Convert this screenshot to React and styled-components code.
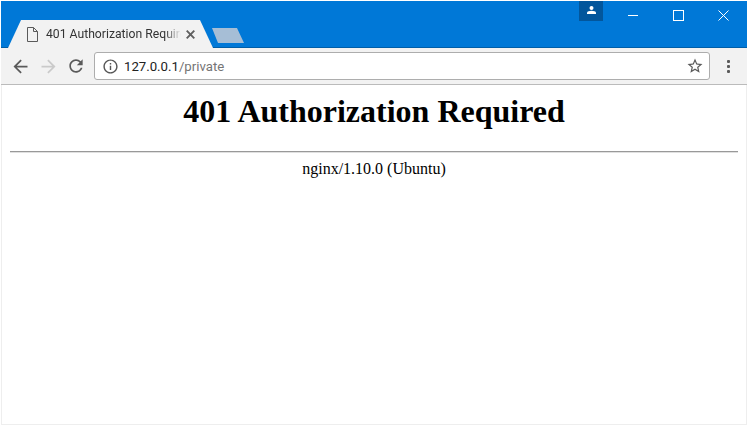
import styled, { createGlobalStyle } from "styled-components"

const Global = createGlobalStyle`
  html, body { margin:0; padding:0; background:#fff; }
`
const Window = styled.div`
  width:748px;
  height:426px;
  padding:1px;
  display:flex;
  flex-direction:column;
  overflow:hidden;
  box-sizing:border-box;
  background:#fff;
`
const TitleBar = styled.div`
  height:47px;
  flex:none;
  background:#0078d7;
  box-shadow:inset 0 -1px 0 #005ea8;
  display:flex;
  align-items:flex-end;
  padding-left:7px;
  position:relative;
`
const Tab = styled.div`
  width:205px;
  height:28px;
  background:#f2f2f2;
  clip-path:polygon(0 100%, 13px 0, 192px 0, 100% 100%);
  display:flex;
  align-items:center;
  padding:0 0 0 19px;
  box-sizing:border-box;
  flex:none;
`
const TabTitle = styled.div`
  font:12.2px Roboto, "Noto Sans", sans-serif;
  color:#333;
  margin-left:8px;
  width:135px;
  white-space:nowrap;
  overflow:hidden;
  -webkit-mask-image:linear-gradient(to right, #000 88%, transparent);
  mask-image:linear-gradient(to right, #000 88%, transparent);
`
const TabClose = styled.svg`
  margin-left:5px;
  flex:none;
`
const NewTab = styled.div`
  width:32px;
  height:15px;
  margin:0 0 5px -1px;
  background:#a6bed6;
  clip-path:polygon(0 0, 25px 0, 100% 100%, 6px 100%);
  flex:none;
`
const WindowControls = styled.div`
  position:absolute;
  top:0;
  right:1px;
  display:flex;
  align-items:flex-start;
`
const Profile = styled.div`
  width:24px;
  height:20px;
  background:#02569c;
  display:flex;
  justify-content:center;
  padding-top:5px;
  box-sizing:border-box;
  margin-right:8px;
`
const ControlButton = styled.div`
  width:45px;
  height:28px;
  display:flex;
  align-items:center;
  justify-content:center;
`
const Toolbar = styled.div`
  height:37px;
  flex:none;
  background:#f2f2f2;
  border-bottom:1px solid #bbb;
  box-sizing:border-box;
  display:flex;
  align-items:center;
  padding-left:5px;
`
const NavButton = styled.div`
  width:28px;
  height:24px;
  display:flex;
  align-items:center;
  justify-content:center;
`
const Omnibox = styled.div`
  width:616px;
  height:28px;
  margin-left:4px;
  background:#fff;
  border:1px solid #adadad;
  border-radius:3px;
  box-sizing:border-box;
  display:flex;
  align-items:center;
  padding:0 5px 0 7px;
`
const Url = styled.div`
  flex:1;
  margin-left:5px;
  font:13.2px Roboto, "Noto Sans", sans-serif;
  color:#222;
  span { color:#757575; }
`
const Menu = styled.div`
  width:36px;
  display:flex;
  flex-direction:column;
  align-items:center;
  gap:2px;
`
const Dot = styled.div`
  width:3px;
  height:3px;
  background:#5a5a5a;
  border-radius:1px;
`
const Page = styled.div`
  flex:1;
  background:#fff;
  border:1px solid #eeeeee;
  border-top:0;
  padding:8px 8px 0;
  font-family:"Liberation Serif", "Times New Roman", serif;
  color:#000;
  text-align:center;
`
const Heading = styled.h1`
  font-size:32px;
  font-weight:700;
  line-height:37px;
  margin:0 0 21px;
`
const Rule = styled.hr`
  margin:0 0 7px;
  height:0;
  border:0;
  border-top:1px solid #999;
  border-bottom:1px solid #e0e0e0;
`
const Server = styled.div`
  font-size:16px;
  line-height:18px;
`

const Icon = ({ d, size, color }) => (
  <svg width={size} height={size} viewBox="0 0 24 24" fill={color}>
    <path d={d} />
  </svg>
)

const BACK = "M20 11H7.83l5.59-5.59L12 4l-8 8 8 8 1.41-1.41L7.83 13H20v-2z"
const FORWARD = "M4 11h12.17l-5.59-5.59L12 4l8 8-8 8-1.41-1.41L16.17 13H4v-2z"
const RELOAD = "M17.65 6.35C16.2 4.9 14.21 4 12 4c-4.42 0-7.99 3.58-7.99 8s3.57 8 7.99 8c3.73 0 6.84-2.55 7.73-6h-2.08c-.82 2.33-3.04 4-5.65 4-3.31 0-6-2.69-6-6s2.69-6 6-6c1.66 0 3.14.69 4.22 1.78L13 11h7V4l-2.35 2.35z"
const INFO = "M11 7h2v2h-2zm0 4h2v6h-2zm1-9C6.48 2 2 6.48 2 12s4.48 10 10 10 10-4.48 10-10S17.52 2 12 2zm0 18c-4.41 0-8-3.59-8-8s3.59-8 8-8 8 3.59 8 8-3.59 8-8 8z"
const STAR = "M22 9.24l-7.19-.62L12 2 9.19 8.63 2 9.24l5.46 4.73L5.82 21 12 17.27 18.18 21l-1.63-7.03L22 9.24zM12 15.4l-3.76 2.27 1-4.28-3.32-2.88 4.38-.38L12 6.1l1.71 4.04 4.38.38-3.32 2.88 1 4.28L12 15.4z"

const App = () => (
  <Window>
    <Global />
    <TitleBar>
      <Tab>
        <svg width="11" height="15" viewBox="0 0 11 15" fill="none" stroke="#5a5a5a">
          <path d="M0.5 0.5H6.5L10.5 4.5V14.5H0.5ZM6.5 0.5V4.5H10.5" />
        </svg>
        <TabTitle>401 Authorization Required</TabTitle>
        <TabClose width="9" height="9" viewBox="0 0 9 9">
          <path d="M0.7 0.7l7.6 7.6M8.3 0.7l-7.6 7.6" stroke="#5f5f5f" strokeWidth="1.9" />
        </TabClose>
      </Tab>
      <NewTab />
      <WindowControls>
        <Profile>
          <svg width="9" height="9" viewBox="0 0 9 9" fill="#fff">
            <circle cx="4.5" cy="2" r="2" />
            <path d="M0 8V6.5C0 5.5 2.5 4.8 4.5 4.8S9 5.5 9 6.5V8Z" />
          </svg>
        </Profile>
        <ControlButton>
          <svg width="11" height="11" viewBox="0 0 11 11"><path d="M0 5.5h10" stroke="#fff" /></svg>
        </ControlButton>
        <ControlButton>
          <svg width="11" height="11" viewBox="0 0 11 11"><rect x="0.5" y="0.5" width="10" height="10" fill="none" stroke="#fff" /></svg>
        </ControlButton>
        <ControlButton>
          <svg width="11" height="11" viewBox="0 0 11 11"><path d="M0.5 0.5l10 10M10.5 0.5l-10 10" stroke="#fff" /></svg>
        </ControlButton>
      </WindowControls>
    </TitleBar>
    <Toolbar>
      <NavButton><Icon d={BACK} size={21} color="#5a5a5a" /></NavButton>
      <NavButton><Icon d={FORWARD} size={21} color="#cacaca" /></NavButton>
      <NavButton><Icon d={RELOAD} size={20} color="#5a5a5a" /></NavButton>
      <Omnibox>
        <Icon d={INFO} size={17} color="#555" />
        <Url>127.0.0.1<span>/private</span></Url>
        <Icon d={STAR} size={18} color="#5a5a5a" />
      </Omnibox>
      <Menu><Dot /><Dot /><Dot /></Menu>
    </Toolbar>
    <Page>
      <Heading>401 Authorization Required</Heading>
      <Rule />
      <Server>nginx/1.10.0 (Ubuntu)</Server>
    </Page>
  </Window>
)

export default App
